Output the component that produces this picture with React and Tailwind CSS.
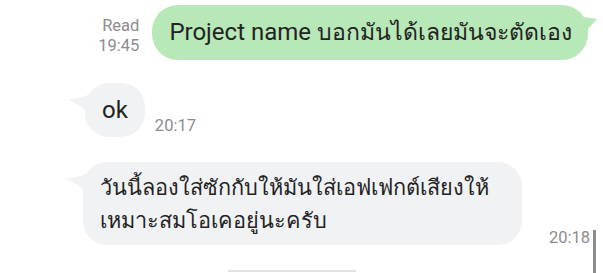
const font = { fontFamily: 'Roboto, "Noto Sans", "DejaVu Sans", sans-serif' };

const TailRight = () => (
  <svg className="absolute -right-[9px] top-[10px]" width="14" height="20" viewBox="0 0 14 20">
    <path d="M0 2 C5 3 10 3 14 4 C10 8 6 13 2 18 Z" fill="#b8e8b7" />
  </svg>
);

const TailLeft = () => (
  <svg className="absolute -left-[17px] top-[10px]" width="20" height="20" viewBox="0 0 20 20">
    <path d="M20 2 C14 4 7 6 0 7 C7 10 12 13 18 18 Z" fill="#f1f2f4" />
  </svg>
);

export default function App() {
  return (
    <div className="relative w-[603px] h-[273px] bg-white overflow-hidden" style={font}>
      <div className="flex flex-col pt-[5px]">
        <div className="flex justify-end items-end gap-[13px] pr-[15px]">
          <div className="flex flex-col items-end pb-[4px] text-[16.5px] leading-[20px] text-[#8b8c90]">
            <span>Read</span>
            <span>19:45</span>
          </div>
          <div className="relative h-[55px] rounded-[26px] bg-[#b8e8b7] pl-[17px] pr-[16px] flex items-center">
            <span className="text-[24px] text-[#232323] whitespace-nowrap">
              Project name <span className="text-[23px]">บอกมันได้เลยมันจะตัดเอง</span>
            </span>
            <TailRight />
          </div>
        </div>

        <div className="flex items-end gap-[10px] pl-[85px] mt-[23px]">
          <div className="relative h-[54px] rounded-[24px] bg-[#f1f2f4] px-[17px] flex items-center">
            <span className="text-[24px] text-[#232323]">ok</span>
            <TailLeft />
          </div>
          <span className="text-[16.5px] leading-[20px] text-[#8b8c90] pb-[1px]">20:17</span>
        </div>

        <div className="flex items-end justify-between pl-[83px] pr-[13px] mt-[25px]">
          <div className="relative w-[439px] h-[83px] rounded-[24px] bg-[#f1f2f4] pl-[17px] pr-[12px] pt-[9px]">
            <p className="text-[21.7px] leading-[33px] text-[#232323] whitespace-nowrap">
              วันนี้ลองใส่ซักกับให้มันใส่เอฟเฟกต์เสียงให้
              <br />
              เหมาะสมโอเคอยู่นะครับ
            </p>
            <TailLeft />
          </div>
          <span className="text-[16.5px] leading-[20px] text-[#8b8c90] -mb-[3px]">20:18</span>
        </div>

        <div className="ml-[228px] mt-[25px] w-[128px] h-[2px] bg-[#e2e2e2]" />
      </div>

      <div className="absolute right-[7px] top-[230px] w-[3px] h-[43px] bg-[#8a8a8a]" />
    </div>
  );
}
